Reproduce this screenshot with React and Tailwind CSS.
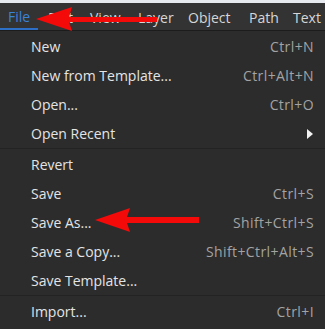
const menus = [
  { label: 'File', cls: 'w-[38px] pl-[8px] border-b-[2px] border-[#2d6fc6] text-[#3b82d9]' },
  { label: 'Edit', cls: 'w-[44px] pl-[10px]' },
  { label: 'View', cls: 'w-[48px] pl-[8px]' },
  { label: 'Layer', cls: 'w-[50px] pl-[8px]' },
  { label: 'Object', cls: 'w-[61px] pl-[8px]' },
  { label: 'Path', cls: 'w-[44px] pl-[8px]' },
  { label: 'Text', cls: 'flex-1 pl-[8px]' },
]

const groups = [
  [
    { label: 'New', key: 'Ctrl+N' },
    { label: 'New from Template...', key: 'Ctrl+Alt+N' },
    { label: 'Open...', key: 'Ctrl+O' },
    { label: 'Open Recent', sub: true },
  ],
  [
    { label: 'Revert' },
    { label: 'Save', key: 'Ctrl+S' },
    { label: 'Save As...', key: 'Shift+Ctrl+S' },
    { label: 'Save a Copy...', key: 'Shift+Ctrl+Alt+S' },
    { label: 'Save Template...' },
  ],
  [{ label: 'Import...', key: 'Ctrl+I' }],
]

const Row = ({ item }) => (
  <div className="flex h-[29px] items-center justify-between pl-[31px] pr-[11px]">
    <span className="text-[#e4e4e4]">{item.label}</span>
    {item.key && <span className="tracking-[0.4px] text-[#a3a3a3]">{item.key}</span>}
    {item.sub && (
      <svg width="6" height="10" viewBox="0 0 6 10" className="mr-[1px]">
        <polygon points="0,0 6,5 0,10" fill="#f2f2f2" />
      </svg>
    )}
  </div>
)

export default function App() {
  return (
    <div
      className="relative h-[329px] w-[325px] overflow-hidden bg-[#2c2c2c] text-[14px]"
      style={{ fontFamily: '"Open Sans", "Noto Sans", sans-serif' }}
    >
      <div className="h-[3px] bg-[#e6eaee]" />
      <div className="flex h-[28px] items-stretch border-b border-[#1c1c1c] bg-[#333333] text-[14px] text-[#d6d6d6]">
        {menus.map((m) => (
          <div key={m.label} className={`flex items-center whitespace-nowrap pt-[2px] ${m.cls}`}>
            {m.label}
          </div>
        ))}
      </div>

      <div className="pt-[1px]">
        {groups.map((g, gi) => (
          <div key={gi} className={gi > 0 ? 'border-t border-[#232323] pt-[1px]' : ''}>
            {g.map((item) => (
              <Row key={item.label} item={item} />
            ))}
          </div>
        ))}
      </div>

      {/* annotation arrows */}
      <svg className="absolute left-0 top-0" width="325" height="329" viewBox="0 0 325 329">
        <polygon points="36,19 72,7 69,17 157,17 157,22 69,22 72,31" fill="#f50a0a" />
        <polygon points="95,220 130,208 127,217 199,217 199,223 127,223 130,232" fill="#f50a0a" />
      </svg>
    </div>
  )
}
